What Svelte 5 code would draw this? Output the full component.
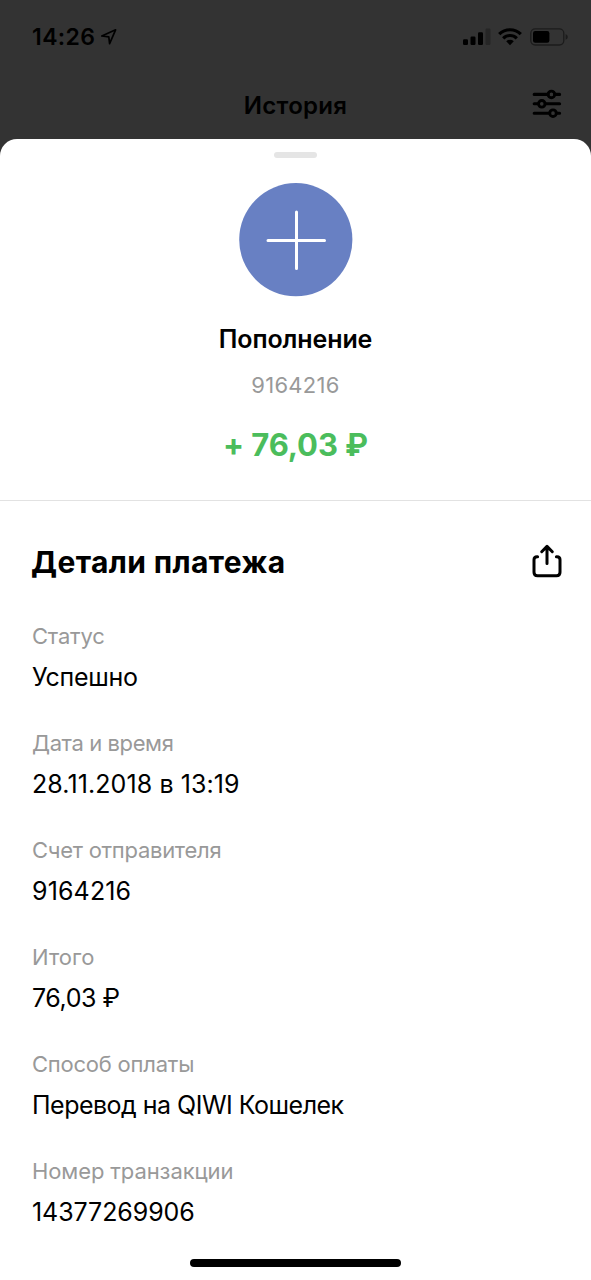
<script>
	// tracking is the letter spacing in px: [label, value]
	const details = [
		{ id: 'status', label: 'Статус', value: 'Успешно', tracking: [-0.2, -0.28] },
		{ id: 'date', label: 'Дата и время', value: '28.11.2018 в 13:19', tracking: [-0.4, 0.09] },
		{ id: 'account', label: 'Счет отправителя', value: '9164216', tracking: [-0.28, 0.14] },
		{ id: 'total', label: 'Итого', value: '76,03 ₽', tracking: [0, -0.45] },
		{ id: 'method', label: 'Способ оплаты', value: 'Перевод на QIWI Кошелек', tracking: [-0.23, -0.51] },
		{ id: 'number', label: 'Номер транзакции', value: '14377269906', tracking: [-0.1, -0.08] },
	];
</script>

<div class="screen">
	<div class="status-bar">
		<div class="clock">
			<span>14:26</span>
			<svg width="18" height="18" viewBox="0 0 18 18">
				<path d="M1.8 8 L15.6 1.8 L9.6 15.6 L8.8 8.8 Z" fill="none" stroke="#000" stroke-width="1.7" stroke-linejoin="round" />
			</svg>
		</div>
		<svg width="106" height="20" viewBox="0 0 106 20">
			<rect x="0" y="12.2" width="5" height="5.8" rx="1.2" />
			<rect x="7.5" y="9.5" width="5" height="8.5" rx="1.2" />
			<rect x="15" y="5.2" width="5" height="12.8" rx="1.2" />
			<rect x="22.5" y="1.5" width="5" height="16.5" rx="1.2" fill="#262626" />
			<g fill="none" stroke="#000" stroke-width="3.2">
				<path d="M36.2 7.2 A15.3 15.3 0 0 1 57.8 7.2" />
				<path d="M40.2 11.3 A9.6 9.6 0 0 1 53.8 11.3" />
			</g>
			<path d="M43.2 14.3 A5.6 5.6 0 0 1 50.8 14.3 L47 18.2 Z" />
			<rect x="67.8" y="1.8" width="33" height="16.2" rx="4.4" fill="none" stroke="#1c1c1c" stroke-width="1.3" />
			<rect x="70" y="4" width="16.4" height="11.8" rx="2.2" />
			<path d="M102.6 7 Q104.8 8 104.8 9.9 Q104.8 11.8 102.6 12.8 Z" fill="#1c1c1c" />
		</svg>
	</div>

	<div class="nav">
		<div class="title">История</div>
		<svg width="30" height="30" viewBox="0 0 30 30" fill="none" stroke="#000" stroke-width="3.1" stroke-linecap="round">
			<path d="M2.2 5.4 H16 M22.8 5.4 H27.6" />
			<circle cx="19.4" cy="5.4" r="3.3" stroke-width="2.9" />
			<path d="M2.2 14.8 H6.4 M13.2 14.8 H27.6" />
			<circle cx="9.8" cy="14.8" r="3.3" stroke-width="2.9" />
			<path d="M2.2 24.2 H17.6 M24.4 24.2 H27.6" />
			<circle cx="21" cy="24.2" r="3.3" stroke-width="2.9" />
		</svg>
	</div>

	<div class="sheet">
		<div class="handle"></div>
		<div class="summary">
			<svg width="114" height="114" viewBox="0 0 114 114">
				<circle cx="56.8" cy="56.7" r="56.6" fill="#6880c3" />
				<path d="M57.5 29 V85.5 M29 57.5 H85.5" stroke="#fff" stroke-width="3" stroke-linecap="round" />
			</svg>
			<div class="name">Пополнение</div>
			<div class="account">9164216</div>
			<div class="amount">+ 76,03 ₽</div>
		</div>

		<div class="details">
			<div class="heading">
				<h2>Детали платежа</h2>
				<svg width="30" height="34" viewBox="0 0 30 34" fill="none" stroke="#000" stroke-width="3" stroke-linecap="round" stroke-linejoin="round">
					<path d="M5.6 12.7 H5 Q2 12.7 2 15.7 V28.2 Q2 31.7 5.5 31.7 H24.5 Q28 31.7 28 28.2 V15.7 Q28 12.7 25 12.7 H24.4" />
					<path d="M15 19.5 V2.6 M9.7 7.7 L15 2.4 L20.3 7.7" />
				</svg>
			</div>
			{#each details as item (item.id)}
				<div class="item">
					<div class="label" style:letter-spacing="{item.tracking[0]}px">{item.label}</div>
					<div class="value" style:letter-spacing="{item.tracking[1]}px">{item.value}</div>
				</div>
			{/each}
		</div>

		<div class="home-bar"></div>
	</div>
</div>

<style>
	:global(body) {
		margin: 0;
		background: #333;
	}

	.screen {
		display: flex;
		flex-direction: column;
		width: 591px;
		height: 1280px;
		overflow: hidden;
		background: #333;
		color: #000;
		font-family: Inter, "Noto Sans", sans-serif;
	}

	.status-bar {
		display: flex;
		flex-shrink: 0;
		justify-content: space-between;
		align-items: center;
		box-sizing: border-box;
		height: 73px;
		padding: 0 22px 0 32px;
	}

	.clock {
		display: flex;
		align-items: center;
		gap: 5px;
		font-size: 23px;
		font-weight: 600;
		line-height: 28px;
		letter-spacing: 0.4px;
	}

	.nav {
		display: grid;
		flex-shrink: 0;
		grid-template-columns: 30px 1fr 30px;
		align-items: center;
		box-sizing: border-box;
		height: 66px;
		padding: 0 29px 4px;
	}

	.title {
		grid-column: 2;
		padding-top: 4px;
		text-align: center;
		font-size: 24px;
		font-weight: 600;
		line-height: 30px;
		letter-spacing: 0.25px;
	}

	.sheet {
		display: flex;
		flex: 1;
		flex-direction: column;
		align-items: center;
		min-height: 0;
		border-radius: 17px 17px 0 0;
		background: #fff;
	}

	.handle {
		flex-shrink: 0;
		width: 43px;
		height: 6px;
		margin-top: 13px;
		border-radius: 3px;
		background: #e5e5e5;
	}

	.summary {
		display: flex;
		flex-direction: column;
		flex-shrink: 0;
		align-items: center;
		box-sizing: border-box;
		width: 100%;
		height: 343px;
		padding-top: 25px;
		border-bottom: 1px solid #e2e2e2;
	}

	.name {
		margin-top: 27px;
		font-size: 25px;
		font-weight: 600;
		line-height: 30px;
		letter-spacing: -0.1px;
	}

	.account {
		margin-top: 17px;
		color: #999;
		font-size: 22px;
		line-height: 28px;
		letter-spacing: 0.3px;
	}

	.amount {
		margin-top: 26px;
		color: #4bbd5c;
		font-size: 31px;
		font-weight: 700;
		line-height: 40px;
		letter-spacing: -0.1px;
	}

	.details {
		flex: 1;
		box-sizing: border-box;
		width: 100%;
		min-height: 0;
		padding: 40px 29px 0 32px;
	}

	.heading {
		display: flex;
		justify-content: space-between;
		align-items: center;
		height: 40px;
		margin-bottom: 40.5px;
	}

	h2 {
		margin: 1px 0 0 -1px;
		font-size: 30px;
		font-weight: 700;
		line-height: 40px;
		letter-spacing: 0.38px;
	}

	.item {
		margin-bottom: 37.2px;
	}

	.label {
		color: #999;
		font-size: 22px;
		line-height: 28px;
	}

	.value {
		margin-top: 12px;
		font-size: 25px;
		line-height: 30px;
	}

	.home-bar {
		flex-shrink: 0;
		width: 211px;
		height: 8px;
		margin-bottom: 13px;
		border-radius: 4px;
		background: #000;
	}
</style>
